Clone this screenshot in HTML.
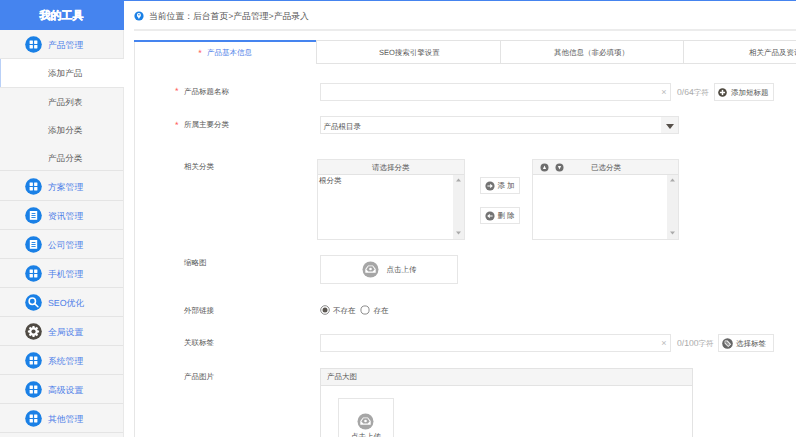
<!DOCTYPE html>
<html><head><meta charset="utf-8">
<style>
*{margin:0;padding:0;box-sizing:border-box}
html,body{width:796px;height:437px;overflow:hidden;background:#fff;font-family:"Liberation Sans",sans-serif;color:#555;font-size:7.5px;text-rendering:geometricPrecision}
.a{position:absolute;white-space:nowrap}
#side{position:absolute;left:0;top:0;width:124px;height:437px;background:#f5f5f5;box-shadow:inset -1px 0 0 #e8e8e8}
#side .hd{position:absolute;left:0;top:0;width:124px;padding-right:1px;height:30px;background:#4584ef;color:#fff;font-weight:bold;font-size:11px;line-height:32px;-webkit-text-stroke:0.4px #fff;text-align:center}
.mi{position:absolute;left:0;width:123px;height:29px;border-bottom:1px solid #e4e4e4;color:#4d7ee8;font-size:8.8px;line-height:30px}
.mi .t{position:absolute;left:48px;top:0}
.ic{position:absolute;left:25.2px;top:5.9px;width:17px;height:17px}
.si{position:absolute;left:0;width:123px;height:28px;color:#555;font-size:8.6px;line-height:29px}
.si .t{position:absolute;left:48px;top:0}
#topline{position:absolute;left:123px;top:0;width:673px;height:1px;background:#4584ef}
.lbl{position:absolute;left:184px;color:#555;font-size:7.5px;line-height:10px;white-space:nowrap}
.star{position:absolute;left:174.9px;color:#f55;font-size:9px;line-height:10px;margin-top:0px}
.inp{position:absolute;border:1px solid #e6e6e6;background:#fff}
.btn{position:absolute;border:1px solid #e6e6e6;background:#fff}
</style></head><body>
<div id="side">
<div class="hd">我的工具</div>
<div class="mi" style="top:30px;height:28px;border-bottom:none"><svg class="ic" style="top:6px" viewBox="0 0 17 17"><circle cx="8.5" cy="8.5" r="8.3" fill="#1a80e6"/><rect x="4.6" y="4.6" width="3.3" height="3.3" rx="0.3" fill="#fff"/><rect x="9.1" y="4.6" width="3.3" height="3.3" rx="0.3" fill="#fff"/><rect x="4.6" y="9.1" width="3.3" height="3.3" rx="0.3" fill="#fff"/><rect x="9.1" y="9.1" width="3.3" height="3.3" rx="0.3" fill="#fff"/></svg><span class="t">产品管理</span></div>
<div class="si" style="top:58.0px;background:#fff;box-shadow:inset 1px 0 0 #b9d0f7;border-top:1px solid #e6e6e6;border-bottom:1px solid #e6e6e6;height:30px;width:124px;"><span class="t">添加产品</span></div>
<div class="si" style="top:87.9px;"><span class="t">产品列表</span></div>
<div class="si" style="top:115.8px;"><span class="t">添加分类</span></div>
<div class="si" style="top:143.7px;"><span class="t">产品分类</span></div>
<div class="a" style="left:0;top:170px;width:123px;height:1px;background:#e4e4e4"></div>
<div class="mi" style="top:172px"><svg class="ic" viewBox="0 0 17 17"><circle cx="8.5" cy="8.5" r="8.3" fill="#1a80e6"/><rect x="4.6" y="4.6" width="3.3" height="3.3" rx="0.3" fill="#fff"/><rect x="9.1" y="4.6" width="3.3" height="3.3" rx="0.3" fill="#fff"/><rect x="4.6" y="9.1" width="3.3" height="3.3" rx="0.3" fill="#fff"/><rect x="9.1" y="9.1" width="3.3" height="3.3" rx="0.3" fill="#fff"/></svg><span class="t">方案管理</span></div>
<div class="mi" style="top:201px"><svg class="ic" viewBox="0 0 17 17"><circle cx="8.5" cy="8.5" r="8.3" fill="#1a80e6"/><rect x="4.8" y="4" width="7.4" height="8.8" fill="#fff"/><rect x="6.6" y="6" width="3.8" height="0.9" fill="#1a80e6"/><rect x="6.4" y="8" width="4.2" height="0.9" fill="#1a80e6"/><rect x="6.4" y="10" width="4.2" height="0.9" fill="#1a80e6"/></svg><span class="t">资讯管理</span></div>
<div class="mi" style="top:230px"><svg class="ic" viewBox="0 0 17 17"><circle cx="8.5" cy="8.5" r="8.3" fill="#1a80e6"/><rect x="4.8" y="4" width="7.4" height="8.8" fill="#fff"/><rect x="6.6" y="6" width="3.8" height="0.9" fill="#1a80e6"/><rect x="6.4" y="8" width="4.2" height="0.9" fill="#1a80e6"/><rect x="6.4" y="10" width="4.2" height="0.9" fill="#1a80e6"/></svg><span class="t">公司管理</span></div>
<div class="mi" style="top:259px"><svg class="ic" viewBox="0 0 17 17"><circle cx="8.5" cy="8.5" r="8.3" fill="#1a80e6"/><rect x="4.6" y="4.6" width="3.3" height="3.3" rx="0.3" fill="#fff"/><rect x="9.1" y="4.6" width="3.3" height="3.3" rx="0.3" fill="#fff"/><rect x="4.6" y="9.1" width="3.3" height="3.3" rx="0.3" fill="#fff"/><rect x="9.1" y="9.1" width="3.3" height="3.3" rx="0.3" fill="#fff"/></svg><span class="t">手机管理</span></div>
<div class="mi" style="top:288px"><svg class="ic" viewBox="0 0 17 17"><circle cx="8.5" cy="8.5" r="8.3" fill="#1a80e6"/><circle cx="7.3" cy="7.2" r="3.2" fill="none" stroke="#fff" stroke-width="1.5"/><line x1="9.6" y1="9.6" x2="12.9" y2="12.7" stroke="#fff" stroke-width="1.5" stroke-linecap="round"/></svg><span class="t">SEO优化</span></div>
<div class="mi" style="top:317px"><svg class="ic" viewBox="0 0 17 17"><circle cx="8.5" cy="8.5" r="8.3" fill="#4f4a43"/><polygon points="12.36,7.43 14.11,7.48 14.11,9.52 12.36,9.57 11.98,10.47 13.19,11.74 11.74,13.19 10.47,11.98 9.57,12.36 9.52,14.11 7.48,14.11 7.43,12.36 6.53,11.98 5.26,13.19 3.81,11.74 5.02,10.47 4.64,9.57 2.89,9.52 2.89,7.48 4.64,7.43 5.02,6.53 3.81,5.26 5.26,3.81 6.53,5.02 7.43,4.64 7.48,2.89 9.52,2.89 9.57,4.64 10.47,5.02 11.74,3.81 13.19,5.26 11.98,6.53" fill="#fff"/><circle cx="8.5" cy="8.5" r="4.3" fill="#fff"/><circle cx="8.5" cy="8.5" r="2.1" fill="#4f4a43"/></svg><span class="t">全局设置</span></div>
<div class="mi" style="top:346px"><svg class="ic" viewBox="0 0 17 17"><circle cx="8.5" cy="8.5" r="8.3" fill="#1a80e6"/><rect x="4.6" y="4.6" width="3.3" height="3.3" rx="0.3" fill="#fff"/><rect x="9.1" y="4.6" width="3.3" height="3.3" rx="0.3" fill="#fff"/><rect x="4.6" y="9.1" width="3.3" height="3.3" rx="0.3" fill="#fff"/><rect x="9.1" y="9.1" width="3.3" height="3.3" rx="0.3" fill="#fff"/></svg><span class="t">系统管理</span></div>
<div class="mi" style="top:375px"><svg class="ic" viewBox="0 0 17 17"><circle cx="8.5" cy="8.5" r="8.3" fill="#1a80e6"/><rect x="4.6" y="4.6" width="3.3" height="3.3" rx="0.3" fill="#fff"/><rect x="9.1" y="4.6" width="3.3" height="3.3" rx="0.3" fill="#fff"/><rect x="4.6" y="9.1" width="3.3" height="3.3" rx="0.3" fill="#fff"/><rect x="9.1" y="9.1" width="3.3" height="3.3" rx="0.3" fill="#fff"/></svg><span class="t">高级设置</span></div>
<div class="mi" style="top:404px"><svg class="ic" viewBox="0 0 17 17"><circle cx="8.5" cy="8.5" r="8.3" fill="#1a80e6"/><rect x="4.6" y="4.6" width="3.3" height="3.3" rx="0.3" fill="#fff"/><rect x="9.1" y="4.6" width="3.3" height="3.3" rx="0.3" fill="#fff"/><rect x="4.6" y="9.1" width="3.3" height="3.3" rx="0.3" fill="#fff"/><rect x="9.1" y="9.1" width="3.3" height="3.3" rx="0.3" fill="#fff"/></svg><span class="t">其他管理</span></div>
</div>
<div id="topline"></div>
<svg class="a" style="left:134.4px;top:11.2px" width="10" height="10" viewBox="0 0 10 10"><circle cx="5" cy="5" r="4.6" fill="#1a80e6"/><circle cx="4.9" cy="3.9" r="2" fill="#fff"/><path d="M3 4.6H6.8L4.9 7.9Z" fill="#fff"/><circle cx="4.9" cy="3.8" r="0.8" fill="#1a80e6"/></svg>
<div class="a" style="left:149px;top:10px;font-size:8.8px;line-height:12px;color:#555">当前位置：后台首页&gt;产品管理&gt;产品录入</div>
<div class="a" style="left:134px;top:29px;width:662px;height:2px;background:#ececec"></div>
<div class="a" style="left:134px;top:40px;width:662px;height:24px;border-top:1px solid #e3e3e3;border-bottom:1px solid #e3e3e3"></div>
<div class="a" style="left:134px;top:40px;width:182px;height:24px;background:#fff;border-top:2px solid #4584ef"></div>
<div class="a" style="left:316px;top:40px;width:1px;height:24px;background:#e3e3e3"></div>
<div class="a" style="left:500px;top:41px;width:1px;height:23px;background:#e3e3e3"></div>
<div class="a" style="left:683px;top:41px;width:1px;height:23px;background:#e3e3e3"></div>
<div class="a" style="left:198.3px;top:47.7px;color:#f55;font-size:9px;line-height:10px">*</div>
<div class="a" style="left:207px;top:47.8px;color:#4d7ee8;line-height:10px">产品基本信息</div>
<div class="a" style="left:379px;top:47.8px;line-height:10px">SEO搜索引擎设置</div>
<div class="a" style="left:554px;top:47.8px;line-height:10px">其他信息（非必填项）</div>
<div class="a" style="left:749px;top:47.8px;line-height:10px">相关产品及资讯</div>
<div class="a" style="left:134px;top:42px;width:1px;height:395px;background:#e6e6e6"></div>
<div class="star" style="top:86px">*</div><div class="lbl" style="top:86.8px">产品标题名称</div>
<div class="inp" style="left:320px;top:83px;width:351px;height:18px"></div>
<div class="a" style="left:661.3px;top:87px;color:#bbb;font-size:9px;line-height:10px">×</div>
<div class="a" style="left:677px;top:86.5px;color:#aaa;line-height:10px"><span style="font-size:8.6px">0/64</span>字符</div>
<div class="btn" style="left:714px;top:83px;width:60px;height:18px"></div>
<svg class="a" style="left:718px;top:87.5px" width="9" height="9" viewBox="0 0 9 9"><circle cx="4.5" cy="4.5" r="4.3" fill="#4d483f"/><rect x="1.9" y="3.75" width="5.2" height="1.5" fill="#fff"/><rect x="3.75" y="1.9" width="1.5" height="5.2" fill="#fff"/></svg>
<div class="a" style="left:731px;top:87.7px;line-height:10px">添加短标题</div>
<div class="star" style="top:120px">*</div><div class="lbl" style="top:120px">所属主要分类</div>
<div class="inp" style="left:320px;top:116px;width:359px;height:18px"></div>
<div class="a" style="left:661px;top:117px;width:17px;height:16px;background:#f4f4f4"></div>
<svg class="a" style="left:666px;top:123.7px" width="8" height="5" viewBox="0 0 8 5"><path d="M0 0H8L4 5Z" fill="#56504a"/></svg>
<div class="a" style="left:323.5px;top:121.5px;line-height:10px">产品根目录</div>
<div class="lbl" style="top:162px">相关分类</div>
<div class="inp" style="left:317px;top:159px;width:148px;height:81px"></div>
<div class="a" style="left:318px;top:160px;width:146px;height:15px;background:#f5f5f5;border-bottom:1px solid #e3e3e3"></div>
<div class="a" style="left:453px;top:175px;width:11px;height:64px;background:#f1f1f1"></div>
<svg class="a" style="left:456px;top:178px" width="5" height="4" viewBox="0 0 5 4"><path d="M0 3.5H5L2.5 0.5Z" fill="#aaa"/></svg>
<svg class="a" style="left:456px;top:231px" width="5" height="4" viewBox="0 0 5 4"><path d="M0 0.5H5L2.5 3.5Z" fill="#aaa"/></svg>
<div class="a" style="left:372px;top:162.5px;line-height:10px">请选择分类</div>
<div class="a" style="left:319px;top:175.5px;line-height:10px">根分类</div>
<div class="inp" style="left:532px;top:159px;width:147px;height:81px"></div>
<div class="a" style="left:533px;top:160px;width:145px;height:15px;background:#f5f5f5;border-bottom:1px solid #e3e3e3"></div>
<div class="a" style="left:667px;top:175px;width:11px;height:64px;background:#f1f1f1"></div>
<svg class="a" style="left:670px;top:178px" width="5" height="4" viewBox="0 0 5 4"><path d="M0 3.5H5L2.5 0.5Z" fill="#aaa"/></svg>
<svg class="a" style="left:670px;top:231px" width="5" height="4" viewBox="0 0 5 4"><path d="M0 0.5H5L2.5 3.5Z" fill="#aaa"/></svg>
<div class="a" style="left:591px;top:162.5px;line-height:10px">已选分类</div>
<svg class="a" style="left:540px;top:163px" width="9" height="9" viewBox="0 0 9 9"><circle cx="4.5" cy="4.5" r="4" fill="#6e6e6e"/><path d="M2.9 5.9H6.1L4.5 2.6Z" fill="#fff"/></svg>
<svg class="a" style="left:554.5px;top:163px" width="9" height="9" viewBox="0 0 9 9"><circle cx="4.5" cy="4.5" r="4" fill="#6e6e6e"/><path d="M2.9 3.1H6.1L4.5 6.4Z" fill="#fff"/></svg>
<div class="btn" style="left:480px;top:177px;width:40px;height:17px"></div>
<svg class="a" style="left:485px;top:181px" width="10" height="10" viewBox="0 0 10 10"><circle cx="5" cy="5" r="4.6" fill="#737373"/><path d="M2.4 4.4H5.2V2.8L7.8 5 5.2 7.2V5.6H2.4Z" fill="#fff"/></svg>
<div class="a" style="left:497.5px;top:180.5px;line-height:10px;letter-spacing:2px">添加</div>
<div class="btn" style="left:480px;top:207px;width:40px;height:17px"></div>
<svg class="a" style="left:485px;top:211px" width="10" height="10" viewBox="0 0 10 10"><circle cx="5" cy="5" r="4.6" fill="#737373"/><path d="M7.6 4.4H4.8V2.8L2.2 5 4.8 7.2V5.6H7.6Z" fill="#fff"/></svg>
<div class="a" style="left:497.5px;top:210.5px;line-height:10px;letter-spacing:2px">删除</div>
<div class="lbl" style="top:257.5px">缩略图</div>
<div class="inp" style="left:320px;top:255px;width:138px;height:29px"></div>
<svg class="a" style="left:361.5px;top:261.2px" width="17" height="17" viewBox="0 0 17 17"><circle cx="8.5" cy="8.5" r="8" fill="#a6a6a6"/><path d="M6.1 4.6H10.9L13.7 8.1V11.8H3.3V8.1Z" fill="#fff"/><path d="M4.3 8.5L6.5 5.3H10.5L12.7 8.5L10.7 10.4H6.3Z" fill="#a6a6a6"/><circle cx="8.5" cy="8" r="1.3" fill="#fff"/></svg>
<div class="a" style="left:386.5px;top:264.5px;line-height:10px">点击上传</div>
<div class="lbl" style="top:305.5px">外部链接</div>
<svg class="a" style="left:319.5px;top:305px" width="10" height="10" viewBox="0 0 10 10"><circle cx="5" cy="5" r="4.3" fill="#fff" stroke="#777" stroke-width="0.85"/><circle cx="5" cy="5" r="2.5" fill="#5a5650"/></svg>
<div class="a" style="left:333px;top:305.5px;line-height:10px">不存在</div>
<svg class="a" style="left:360.3px;top:305px" width="10" height="10" viewBox="0 0 10 10"><circle cx="5" cy="5" r="4.1" fill="#fff" stroke="#777" stroke-width="0.85"/></svg>
<div class="a" style="left:373.5px;top:305.5px;line-height:10px">存在</div>
<div class="lbl" style="top:338px">关联标签</div>
<div class="inp" style="left:320px;top:334px;width:351px;height:18px"></div>
<div class="a" style="left:661.3px;top:338px;color:#bbb;font-size:9px;line-height:10px">×</div>
<div class="a" style="left:677px;top:337.5px;color:#aaa;line-height:10px"><span style="font-size:8.6px">0/100</span>字符</div>
<div class="btn" style="left:718px;top:334px;width:56px;height:18px"></div>
<svg class="a" style="left:722px;top:337.8px" width="11" height="11" viewBox="0 0 11 11"><circle cx="5.5" cy="5.5" r="5.3" fill="#666"/><path d="M2.6 3.1V5.6L6.2 9.1 9.1 6.2 5.6 2.6H3.1Z" fill="#fff"/><path d="M3.5 3.8V5.2L6.2 7.9 7.9 6.2 5.2 3.5H3.8Z" fill="#999"/><circle cx="3.9" cy="3.9" r="0.65" fill="#666"/></svg>
<div class="a" style="left:736px;top:338.8px;line-height:10px">选择标签</div>
<div class="lbl" style="top:371.5px">产品图片</div>
<div class="a" style="left:320px;top:368px;width:373px;height:80px;border:1px solid #e3e3e3;background:#fff"></div>
<div class="a" style="left:321px;top:369px;width:371px;height:17px;background:#f5f5f5;border-bottom:1px solid #e3e3e3"></div>
<div class="a" style="left:327px;top:371.5px;line-height:10px">产品大图</div>
<div class="inp" style="left:338px;top:398px;width:56px;height:50px"></div>
<svg class="a" style="left:357.1px;top:413.1px" width="17" height="17" viewBox="0 0 17 17"><circle cx="8.5" cy="8.5" r="8" fill="#a6a6a6"/><path d="M6.1 4.6H10.9L13.7 8.1V11.8H3.3V8.1Z" fill="#fff"/><path d="M4.3 8.5L6.5 5.3H10.5L12.7 8.5L10.7 10.4H6.3Z" fill="#a6a6a6"/><circle cx="8.5" cy="8" r="1.3" fill="#fff"/></svg>
<div class="a" style="left:351px;top:432px;line-height:10px">点击上传</div>
</body></html>
